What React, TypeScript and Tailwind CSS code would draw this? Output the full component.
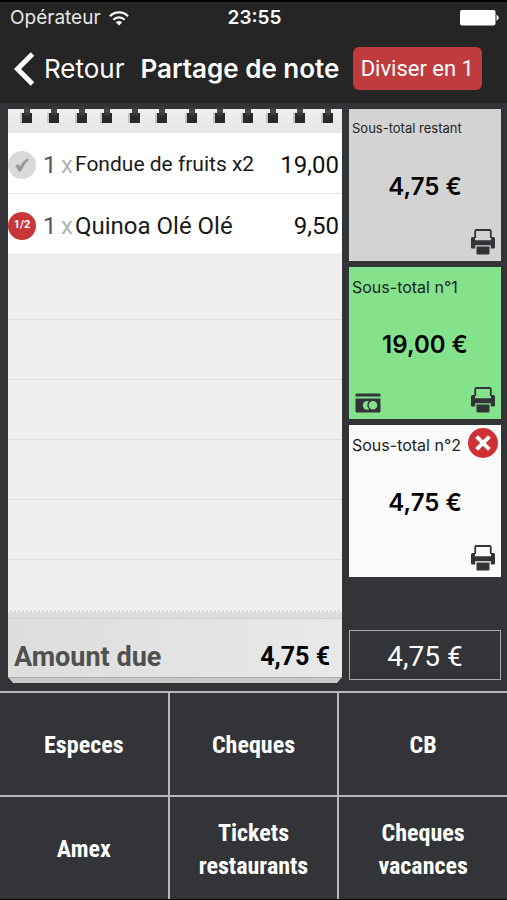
import { useState } from "react";

type NoteItem = {
  id: string;
  quantity: number;
  name: string;
  price: string;
  share: string | null;
  textSize: string;
};

type SubTotal = {
  id: string;
  label: string;
  amount: string;
  background: string;
  labelSize: string;
  isPaid: boolean;
  canRemove: boolean;
};

const items: NoteItem[] = [
  { id: "fondue", quantity: 1, name: "Fondue de fruits x2", price: "19,00", share: null, textSize: "text-[21px]" },
  { id: "quinoa", quantity: 1, name: "Quinoa Olé Olé", price: "9,50", share: "1/2", textSize: "text-[24px]" },
];

const subTotals: SubTotal[] = [
  {
    id: "remaining",
    label: "Sous-total restant",
    amount: "4,75 €",
    background: "bg-[#d3d3d3]",
    labelSize: "text-[13px]",
    isPaid: false,
    canRemove: false,
  },
  {
    id: "first",
    label: "Sous-total n°1",
    amount: "19,00 €",
    background: "bg-[#84e28b]",
    labelSize: "text-[16px]",
    isPaid: true,
    canRemove: false,
  },
  {
    id: "second",
    label: "Sous-total n°2",
    amount: "4,75 €",
    background: "bg-[#fafafa]",
    labelSize: "text-[16px]",
    isPaid: false,
    canRemove: true,
  },
];

const payments = [
  "Especes",
  "Cheques",
  "CB",
  "Amex",
  "Tickets restaurants",
  "Cheques vacances",
];

const ringPositions = [19, 46, 74, 99, 127, 154, 184, 212, 240, 265, 292, 320];

function WifiIcon() {
  return (
    <svg viewBox="0 0 20 15" className="h-[15px] w-5" fill="none" stroke="#fff" strokeWidth="2.2">
      <path d="M1 5.2A12.6 12.6 0 0 1 19 5.2" />
      <path d="M4.4 8.7A7.9 7.9 0 0 1 15.6 8.7" />
      <path d="M10 14.6 6.8 11.3A4.5 4.5 0 0 1 13.2 11.3Z" fill="#fff" stroke="none" />
    </svg>
  );
}

function BatteryIcon() {
  return (
    <svg viewBox="0 0 39 16" className="h-4 w-[39px]" fill="#fff">
      <rect width="35.5" height="15.5" rx="2" />
      <path d="M36.5 4.8Q38.8 5.8 38.8 7.8T36.5 10.8Z" />
    </svg>
  );
}

function PrinterIcon() {
  return (
    <svg viewBox="0 0 24 26" className="h-[26px] w-6">
      <path
        d="M4.2 9V2.2Q4.2 1 5.4 1H18.6Q19.8 1 19.8 2.2V9"
        fill="none"
        stroke="#333437"
        strokeWidth="1.8"
      />
      <path
        d="M1.5 8H4V11.2H20V8H22.5Q24 8 24 9.5V18.5Q24 19.5 23 19.5H19.8V16.2H4.2V19.5H1Q0 19.5 0 18.5V9.5Q0 8 1.5 8Z"
        fill="#333437"
      />
      <path d="M5.5 17.4H18.5V24.5Q18.5 25.5 17.5 25.5H6.5Q5.5 25.5 5.5 24.5Z" fill="#333437" />
    </svg>
  );
}

function CardIcon() {
  return (
    <svg viewBox="0 0 26 20" className="h-5 w-[26px]">
      <path d="M1.5.5H24.5Q25.5.5 25.5 1.5V3.4H.5V1.5Q.5.5 1.5.5Z" fill="#333437" />
      <path d="M.5 5.4H25.5V18.5Q25.5 19.5 24.5 19.5H1.5Q.5 19.5.5 18.5Z" fill="#333437" />
      <circle cx="12.2" cy="12.3" r="4.4" fill="#84e28b" />
      <circle cx="18" cy="12.3" r="5" fill="#84e28b" stroke="#333437" strokeWidth="1.4" />
    </svg>
  );
}

function SpiralBinding() {
  return (
    <svg viewBox="0 0 334 28" preserveAspectRatio="none" className="block h-7 w-full">
      <defs>
        <linearGradient id="paper" x1="0" y1="0" x2="0" y2="1">
          <stop offset="0" stopColor="#efefef" />
          <stop offset="1" stopColor="#e6e6e6" />
        </linearGradient>
        <linearGradient id="ring" x1="0" y1="0" x2="0" y2="1">
          <stop offset="0" stopColor="#2e2e2e" />
          <stop offset="0.5" stopColor="#4a4a4a" />
          <stop offset="1" stopColor="#2a2a2a" />
        </linearGradient>
      </defs>
      <rect y="4" width="334" height="24" fill="url(#paper)" />
      {ringPositions.map((x) => (
        <g key={x}>
          <rect x={x - 7} y="8" width="3" height="10" fill="#c4c4c4" />
          <rect x={x - 5} y="8" width="10" height="10" fill="#292929" />
          <rect x={x - 3} y="1" width="6" height="11" rx="1" fill="url(#ring)" />
        </g>
      ))}
    </svg>
  );
}

function NoteRow({ item }: { item: NoteItem }) {
  const [checked, setChecked] = useState(true);

  return (
    <li className="border-b border-[#e4e6e8] bg-white">
      <label className="flex h-[60px] items-center pt-[3px] pr-[3px]">
        <span className="grid size-7 shrink-0 place-items-center">
          <input
            type="checkbox"
            checked={checked}
            onChange={() => setChecked(!checked)}
            className={`col-start-1 row-start-1 size-7 appearance-none rounded-full ${
              item.share ? "bg-[#c8363a]" : "bg-[#d9d9d9]"
            }`}
          />
          {item.share ? (
            <span className="col-start-1 row-start-1 text-[11px] font-bold text-white">
              {item.share}
            </span>
          ) : (
            <svg viewBox="0 0 14 14" className="col-start-1 row-start-1 size-[14px]">
              <path
                d="M.3 8 3 6Q4 7 4.7 8.6 7.6 3.4 12.4.2L13.8 1.8Q9 6.2 6 13.4H3.6Q2.4 10.2.3 8Z"
                fill="#999"
              />
            </svg>
          )}
        </span>
        <span className="ml-[7px] w-4 shrink-0 text-[24px] text-[#555]">{item.quantity}</span>
        <span className="w-4 shrink-0 text-center text-[24px] text-[#b4b4b4]">x</span>
        <span className={`flex-1 whitespace-nowrap text-[#1a1a1a] ${item.textSize}`}>{item.name}</span>
        <span className="text-[24px] text-[#111]">{item.price}</span>
      </label>
    </li>
  );
}

function SubTotalCard({ subTotal }: { subTotal: SubTotal }) {
  return (
    <article
      className={`flex h-[152px] flex-col font-[Inter,sans-serif] text-black ${subTotal.background}`}
    >
      <div className="flex h-10 items-center justify-between px-[3px]">
        <h2 className={`whitespace-nowrap text-[#222] ${subTotal.labelSize}`}>{subTotal.label}</h2>
        {subTotal.canRemove && (
          <button type="button" aria-label="Supprimer" className="mb-1 shrink-0">
            <svg viewBox="0 0 30 30" className="size-[30px]">
              <circle cx="15" cy="15" r="15" fill="#cf3034" />
              <path d="M8.6 8.6 21.4 21.4M21.4 8.6 8.6 21.4" stroke="#fff" strokeWidth="4" />
            </svg>
          </button>
        )}
      </div>

      <p className="flex flex-1 items-center justify-center pt-1 text-[24px] font-semibold">
        {subTotal.amount}
      </p>

      <div className="flex h-10 items-end justify-end px-[6px] pb-[6px]">
        {subTotal.isPaid && (
          <span className="mr-auto">
            <CardIcon />
          </span>
        )}
        <button type="button" aria-label="Imprimer">
          <PrinterIcon />
        </button>
      </div>
    </article>
  );
}

export default function App() {
  const [amount, setAmount] = useState("4,75 €");

  return (
    <main className="flex min-h-screen flex-col border-t-2 border-b border-black bg-[#333437] font-[Roboto,sans-serif] text-white">
      <header className="bg-[#252525] font-[Inter,sans-serif]">
        <div className="grid h-8 grid-cols-3 items-center pr-2 pl-[10px] text-[19px]">
          <div className="flex items-center gap-2 text-[#e6e6e6]">
            <span>Opérateur</span>
            <WifiIcon />
          </div>
          <span className="text-center font-semibold">23:55</span>
          <span className="justify-self-end">
            <BatteryIcon />
          </span>
        </div>

        <div className="flex h-[69px] items-center pr-[25px] pl-[14px]">
          <button type="button" className="flex items-center gap-[9px] text-[26px]">
            <svg viewBox="0 0 21 34" className="h-[34px] w-[21px]" fill="none" stroke="#fff" strokeWidth="5">
              <path d="M18.5 2 3.5 17 18.5 32" />
            </svg>
            Retour
          </button>
          <h1 className="ml-4 flex-1 text-[26px] font-semibold whitespace-nowrap">Partage de note</h1>
          <button
            type="button"
            className="h-[43px] shrink-0 rounded-md bg-[#bf3b3e] px-2 font-[Roboto,sans-serif] text-[22px] whitespace-nowrap"
          >
            Diviser en 1
          </button>
        </div>
      </header>

      <div className="flex flex-1 gap-[7px] pt-[2px] pr-[6px] pb-2 pl-2">
        <section className="flex min-w-0 flex-1 flex-col">
          <SpiralBinding />

          <ul>
            {items.map((item) => (
              <NoteRow key={item.id} item={item} />
            ))}
          </ul>

          <div className="flex-1 bg-[#efefef] bg-[repeating-linear-gradient(to_bottom,transparent_0px,transparent_59px,#dcdcdc_59px,#dcdcdc_60px)] bg-position-[0_5px] bg-no-repeat" />

          <div className="h-[9px] border-t-2 border-b border-t-[#efefef] border-b-[#cfcfcf] [border-top-style:dotted] bg-[#dcdcdc]" />
          <div className="flex h-[58px] items-end justify-between bg-linear-to-r from-[#dddddd] to-[#e9e9e9] pr-3 pb-[2px] pl-[6px] leading-9 font-bold">
            <span className="text-[27px] text-[#505050]">Amount due</span>
            <span className="text-[25px] text-black">4,75 €</span>
          </div>
          <div className="h-[6px] border-t border-[#aaa] bg-[#c9c9c9] [clip-path:polygon(0_0,100%_0,calc(100%-5px)_100%,5px_100%)]" />
        </section>

        <aside className="flex w-[152px] shrink-0 flex-col gap-[6px] pt-[4px] pb-[3px]">
          {subTotals.map((subTotal) => (
            <SubTotalCard key={subTotal.id} subTotal={subTotal} />
          ))}
          <input
            type="text"
            aria-label="Montant"
            value={amount}
            onChange={(event) => setAmount(event.target.value)}
            className="mt-auto h-[50px] w-full border border-[#aaa] bg-transparent pt-[3px] text-center text-[28px]"
          />
        </aside>
      </div>

      <nav className="grid grid-cols-3 gap-[2px] border-t-2 border-[#b8b8ba] bg-[#b8b8ba]">
        {payments.map((payment) => (
          <button
            key={payment}
            type="button"
            className="h-[102px] bg-[#333437] px-6 pt-[3px] font-['Roboto_Condensed',Roboto,sans-serif] text-[24px] leading-[33px] font-bold"
          >
            {payment}
          </button>
        ))}
      </nav>
    </main>
  );
}
